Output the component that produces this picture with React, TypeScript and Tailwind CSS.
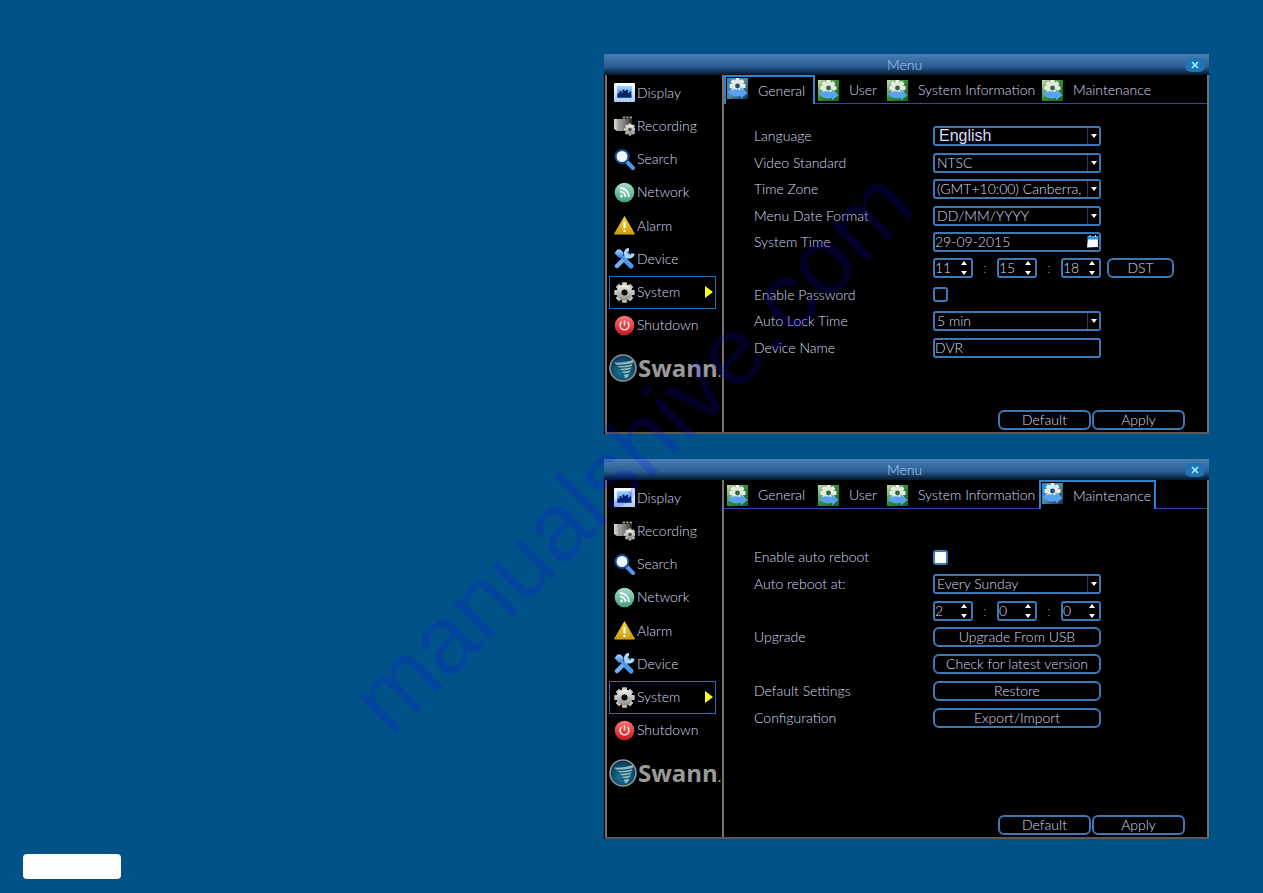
import { useId, type ReactNode } from "react";
import clsx from "clsx";

type TabName = "General" | "User" | "System Information" | "Maintenance";

const tabs: { name: TabName; width: string }[] = [
  { name: "General", width: "w-[91px]" },
  { name: "User", width: "w-[69px]" },
  { name: "System Information", width: "w-[155px]" },
  { name: "Maintenance", width: "w-[117px]" },
];

// shared gradients, referenced by id from every icon
function Gradients() {
  return (
    <svg width="0" height="0" className="absolute" aria-hidden="true">
      <defs>
        <linearGradient id="silver" x1="0" y1="0" x2="0" y2="1">
          <stop offset="0" stopColor="#f2f2ee" />
          <stop offset="1" stopColor="#8b8b88" />
        </linearGradient>
        <linearGradient id="film" x1="0" y1="0" x2="1" y2="0">
          <stop offset="0" stopColor="#d8d6d2" />
          <stop offset="1" stopColor="#4a4845" />
        </linearGradient>
        <linearGradient id="sky" x1="0" y1="0" x2="0" y2="1">
          <stop offset="0" stopColor="#a9d6fb" />
          <stop offset="1" stopColor="#2f7de0" />
        </linearGradient>
        <linearGradient id="frame" x1="0" y1="0" x2="0" y2="1">
          <stop offset="0" stopColor="#ffffff" />
          <stop offset="1" stopColor="#a9cdf0" />
        </linearGradient>
        <linearGradient id="gold" x1="0" y1="0" x2="0" y2="1">
          <stop offset="0" stopColor="#f8dc5a" />
          <stop offset="1" stopColor="#c99a08" />
        </linearGradient>
        <linearGradient id="mint" x1="0" y1="0" x2="0" y2="1">
          <stop offset="0" stopColor="#a5e0c6" />
          <stop offset="1" stopColor="#3f9f82" />
        </linearGradient>
        <linearGradient id="ruby" x1="0" y1="0" x2="0" y2="1">
          <stop offset="0" stopColor="#f77a78" />
          <stop offset="1" stopColor="#c8141e" />
        </linearGradient>
        <linearGradient id="tabGreen" x1="0" y1="0" x2="1" y2="1">
          <stop offset="0" stopColor="#c4dfae" />
          <stop offset="0.5" stopColor="#2f8a34" />
          <stop offset="1" stopColor="#0b6a12" />
        </linearGradient>
        <linearGradient id="tabBlue" x1="0" y1="0" x2="1" y2="1">
          <stop offset="0" stopColor="#2f86d8" />
          <stop offset="0.5" stopColor="#4d8a9c" />
          <stop offset="1" stopColor="#06335c" />
        </linearGradient>
        <radialGradient id="globe" cx="0.5" cy="0.6" r="0.6">
          <stop offset="0" stopColor="#1f86a8" />
          <stop offset="1" stopColor="#062f4c" />
        </radialGradient>
      </defs>
    </svg>
  );
}

function Gear({
  cx,
  cy,
  r,
  hole,
  fill = "url(#silver)",
  teeth = "#c9c9c4",
}: {
  cx: number;
  cy: number;
  r: number;
  hole: string;
  fill?: string;
  teeth?: string;
}) {
  return (
    <g transform={`translate(${cx} ${cy})`}>
      {[0, 45, 90, 135].map((angle) => (
        <rect
          key={angle}
          x={-r * 0.24}
          y={-r}
          width={r * 0.48}
          height={r * 2}
          rx={r * 0.08}
          fill={teeth}
          transform={`rotate(${angle})`}
        />
      ))}
      <circle r={r * 0.78} fill={fill} />
      <circle r={r * 0.3} fill={hole} />
    </g>
  );
}

function Icon({ className, children }: { className?: string; children: ReactNode }) {
  return (
    <svg
      viewBox="0 0 21 21"
      className={clsx("size-[21px] shrink-0", className)}
      aria-hidden="true"
    >
      {children}
    </svg>
  );
}

const menuItems: { name: string; icon: ReactNode }[] = [
  {
    name: "Display",
    icon: (
      <>
        <rect y="1" width="21" height="19" rx="1" fill="url(#frame)" />
        <rect x="3" y="4" width="15" height="12" fill="url(#sky)" />
        <path
          d="M3.500 15.500v-4h2V9h2v2h1V7.500h2V9h1.500V8h2v3h1.500V9.500h1.500v6z"
          fill="#08265e"
        />
      </>
    ),
  },
  {
    name: "Recording",
    icon: (
      <>
        <path d="M8 1h10v12H8z" fill="#2c2a28" />
        <path
          d="M9 2.500h2m1.500 0h2m1.500 0h2"
          stroke="#a09c98"
          strokeWidth="1.500"
        />
        <path d="M0 4h16v12H3l-3-2z" fill="url(#film)" />
        <path d="M5 4v12M10 4v12" stroke="#8a8784" />
        <Gear cx={16} cy={14.5} r={6} hole="#4a4845" />
      </>
    ),
  },
  {
    name: "Search",
    icon: (
      <>
        <path
          d="M13 13l6 6"
          stroke="#4c97ec"
          strokeWidth="4"
          strokeLinecap="round"
        />
        <circle cx="8" cy="7.500" r="6" fill="#eef6ff" />
        <circle
          cx="8"
          cy="7.500"
          r="6.500"
          fill="none"
          stroke="#124a94"
          strokeWidth="2"
        />
      </>
    ),
  },
  {
    name: "Network",
    icon: (
      <>
        <circle cx="10.500" cy="10.500" r="9.800" fill="url(#mint)" />
        <circle cx="7.500" cy="14" r="1.500" fill="#fff" />
        <path
          d="M6 9.500a5.500 5.500 0 0 1 5.500 5.500M6 6a9 9 0 0 1 9 9"
          fill="none"
          stroke="#fff"
          strokeWidth="1.800"
        />
      </>
    ),
  },
  {
    name: "Alarm",
    icon: (
      <>
        <path
          d="M10.500 1.500L20.500 19H0.500z"
          fill="url(#gold)"
          stroke="#d8a810"
          strokeLinejoin="round"
        />
        <path d="M10.500 7v6.500M10.500 15v2" stroke="#fff" strokeWidth="2" />
      </>
    ),
  },
  {
    name: "Device",
    icon: (
      <>
        <path
          d="M3 18L14 7"
          stroke="#6fb0f4"
          strokeWidth="4.500"
          strokeLinecap="round"
        />
        <path
          d="M19 5.500a3.700 3.700 0 1 1-4-4"
          fill="none"
          stroke="#a9d6fb"
          strokeWidth="3.400"
        />
        <path d="M6 7l10 10" stroke="#4c97ec" strokeWidth="3" />
        <path
          d="M12.500 13.500l4.500 4.500"
          stroke="#4c97ec"
          strokeWidth="5"
          strokeLinecap="round"
        />
        <path d="M0.500 5l3-3.500h3l3 3v4l-4.500 1.500z" fill="url(#sky)" />
      </>
    ),
  },
  {
    name: "System",
    icon: <Gear cx={10.5} cy={10.5} r={10.2} hole="#0a0a0a" />,
  },
  {
    name: "Shutdown",
    icon: (
      <>
        <circle cx="10.500" cy="10.500" r="9.800" fill="url(#ruby)" />
        <path
          d="M7.500 7a4.500 4.500 0 1 0 6 0M10.500 5.500v5"
          fill="none"
          stroke="#ffe4e0"
          strokeWidth="1.400"
        />
      </>
    ),
  },
];

function TabIcon({ active }: { active: boolean }) {
  return (
    <Icon className={active ? "mt-px self-start" : undefined}>
      <rect width="21" height="21" fill={active ? "url(#tabBlue)" : "url(#tabGreen)"} />
      <Gear
        cx={10.5}
        cy={8}
        r={8}
        hole={active ? "#1c4f7c" : "#2a6a38"}
        fill="#e4e8e0"
        teeth="#f2f4ee"
      />
      <path
        d="M1 14c2.500-3 7-3.500 12.500-2V9l7 6-6.500 5.500V18c-5 1.200-10 .2-13-4z"
        fill="#5aa2ee"
      />
    </Icon>
  );
}

function SwannLogo() {
  return (
    <div className="mt-3 flex items-center gap-px pl-0.5">
      <svg viewBox="0 0 28 28" className="size-7 shrink-0" aria-hidden="true">
        <circle cx="14" cy="14" r="13" fill="url(#globe)" stroke="#8e9494" strokeWidth="1.600" />
        <path
          d="M5 8.500c6 .5 13-.5 19.500-2.500l-1 4L19 23l-3 1.500c-1-5-4-10-11-16z"
          fill="#8fb8c0"
        />
        <path
          d="M5 11c7 .8 13 .2 19-1.500M8 14c6 .5 10 0 15-1.500M10 17c4 .3 8-.2 12-1.500M12 20c3 .2 6-.2 9-1.200"
          fill="none"
          stroke="#0d4a66"
          strokeWidth="1.200"
        />
      </svg>
      <span className="font-['Open_Sans',sans-serif] text-2xl leading-7 font-bold text-[#9a9a98]">
        Swann<span className="text-xs">.</span>
      </span>
    </div>
  );
}

function Sidebar() {
  return (
    <nav className="w-[119px] shrink-0 border-x-2 border-[#77726c] pt-px">
      <ul className="grid h-[266px] auto-rows-fr">
        {menuItems.map(({ name, icon }) => (
          <li key={name} className="pr-1.5 pl-0.5">
            <a
              href={`#${name.toLowerCase()}`}
              className={clsx(
                "flex h-full items-center gap-0.5 border pr-0.5 pl-1",
                name === "System" ? "border-[#1c72b4]" : "border-transparent",
              )}
            >
              <Icon>{icon}</Icon>
              {name}
              {name === "System" && (
                <svg viewBox="0 0 8 12" className="ml-auto h-3 w-2" aria-hidden="true">
                  <path d="M0 0l8 6-8 6z" fill="#ffff1e" />
                </svg>
              )}
            </a>
          </li>
        ))}
      </ul>
      <SwannLogo />
    </nav>
  );
}

function TabBar({ active }: { active: TabName }) {
  return (
    <div role="tablist" className="flex h-[29px]">
      {tabs.map(({ name, width }) => {
        const selected = name === active;
        return (
          <button
            key={name}
            type="button"
            role="tab"
            aria-selected={selected}
            className={clsx(
              "flex items-center gap-2.5 whitespace-nowrap",
              width,
              selected
                ? "border-x-2 border-t-2 border-[#2f82cc] pl-px"
                : "border-b border-[#2450a0] pt-0.5 pl-[3px]",
            )}
          >
            <TabIcon active={selected} />
            {name}
          </button>
        );
      })}
      <div className="flex-1 border-b border-[#2450a0]" />
    </div>
  );
}

function Row({
  label,
  htmlFor,
  children,
}: {
  label?: string;
  htmlFor?: string;
  children: ReactNode;
}) {
  return (
    <div className="flex items-center">
      <div className="w-[179px] shrink-0">
        {label && <label htmlFor={htmlFor}>{label}</label>}
      </div>
      {children}
    </div>
  );
}

function SelectRow({
  label,
  value,
  large,
}: {
  label: string;
  value: string;
  large?: boolean;
}) {
  const id = useId();
  return (
    <Row label={label} htmlFor={id}>
      <div className="relative">
        <select
          id={id}
          className={clsx(
            "block h-5 w-[168px] appearance-none rounded-[3px] border-2 border-[#3a78b8] bg-black pr-4",
            large
              ? "pl-1 font-['Liberation_Sans',sans-serif] text-base leading-4 text-[#dcdcff]"
              : "pl-0.5 leading-4",
          )}
        >
          <option>{value}</option>
        </select>
        <span className="pointer-events-none absolute inset-y-0.5 right-0.5 flex w-3 items-center justify-center border-l border-[#34346c] bg-black">
          <svg viewBox="0 0 6 4" className="h-1 w-1.5" aria-hidden="true">
            <path d="M0 0h6L3 4z" fill="#fff" />
          </svg>
        </span>
      </div>
    </Row>
  );
}

function Spinner({ label, value }: { label: string; value: string }) {
  return (
    <div className="flex h-5 w-10 items-center rounded-[3px] border-2 border-[#3a78b8] pr-1">
      <input
        aria-label={label}
        inputMode="numeric"
        defaultValue={value}
        className="w-0 flex-1 bg-transparent leading-4 outline-none"
      />
      <div className="flex flex-col gap-1.5">
        <button type="button" aria-label={`${label} up`}>
          <svg viewBox="0 0 6 4" className="block h-1 w-1.5">
            <path d="M0 4h6L3 0z" fill="#fff" />
          </svg>
        </button>
        <button type="button" aria-label={`${label} down`}>
          <svg viewBox="0 0 6 4" className="block h-1 w-1.5">
            <path d="M0 0h6L3 4z" fill="#fff" />
          </svg>
        </button>
      </div>
    </div>
  );
}

function TimeFields({ values }: { values: [string, string, string] }) {
  return (
    <div className="flex items-center">
      <Spinner label="Hours" value={values[0]} />
      <span className="w-6 text-center text-[#8a8ca8]">:</span>
      <Spinner label="Minutes" value={values[1]} />
      <span className="w-6 text-center text-[#8a8ca8]">:</span>
      <Spinner label="Seconds" value={values[2]} />
    </div>
  );
}

function PillButton({ width, children }: { width: string; children: ReactNode }) {
  return (
    <button
      type="button"
      className={clsx(
        "h-5 rounded-[6px] border-2 border-[#3a78b8] text-center leading-4 whitespace-nowrap",
        width,
      )}
    >
      {children}
    </button>
  );
}

const checkboxStyle =
  "size-[15px] appearance-none rounded-[3px] border-2 border-[#3a78b8] checked:bg-white";

function GeneralForm() {
  return (
    <div className="mt-[19px] grid h-[238px] auto-rows-fr pl-[30px]">
      <SelectRow label="Language" value="English" large />
      <SelectRow label="Video Standard" value="NTSC" />
      <SelectRow label="Time Zone" value="(GMT+10:00) Canberra," />
      <SelectRow label="Menu Date Format" value="DD/MM/YYYY" />
      <Row label="System Time" htmlFor="system-time">
        <div className="flex h-5 w-[168px] items-center rounded-[3px] border-2 border-[#3a78b8]">
          <input
            id="system-time"
            defaultValue="29-09-2015"
            className="w-0 flex-1 bg-transparent leading-4 outline-none"
          />
          <svg viewBox="0 0 13 13" className="size-[13px]" aria-hidden="true">
            <path d="M2 2h10v10l-11 .5z" fill="#f4f8ff" />
            <path d="M1.500 1h11v3.500h-11z" fill="#2f8fe0" />
            <path d="M4 0v2M9.500 0v2" stroke="#fff" />
          </svg>
        </div>
      </Row>
      <Row>
        <div className="flex gap-1.5">
          <TimeFields values={["11", "15", "18"]} />
          <PillButton width="w-[67px]">DST</PillButton>
        </div>
      </Row>
      <Row label="Enable Password" htmlFor="enable-password">
        <input id="enable-password" type="checkbox" className={checkboxStyle} />
      </Row>
      <SelectRow label="Auto Lock Time" value="5 min" />
      <Row label="Device Name" htmlFor="device-name">
        <input
          id="device-name"
          defaultValue="DVR"
          className="h-5 w-[168px] rounded-[3px] border-2 border-[#3a78b8] bg-black leading-4 outline-none"
        />
      </Row>
    </div>
  );
}

function MaintenanceForm() {
  return (
    <div className="mt-[35px] grid h-[187px] auto-rows-fr pl-[30px]">
      <Row label="Enable auto reboot" htmlFor="auto-reboot">
        <input
          id="auto-reboot"
          type="checkbox"
          defaultChecked
          className={checkboxStyle}
        />
      </Row>
      <SelectRow label="Auto reboot at:" value="Every Sunday" />
      <Row>
        <TimeFields values={["2", "0", "0"]} />
      </Row>
      <Row label="Upgrade">
        <PillButton width="w-[168px]">Upgrade From USB</PillButton>
      </Row>
      <Row>
        <PillButton width="w-[168px]">Check for latest version</PillButton>
      </Row>
      <Row label="Default Settings">
        <PillButton width="w-[168px]">Restore</PillButton>
      </Row>
      <Row label="Configuration">
        <PillButton width="w-[168px]">Export/Import</PillButton>
      </Row>
    </div>
  );
}

function MenuWindow({ tab, children }: { tab: TabName; children: ReactNode }) {
  return (
    <section className="flex min-h-[380px] flex-col bg-black">
      <header className="grid h-[21px] grid-cols-[1fr_auto_1fr] items-center bg-linear-to-b from-[#4a7fb4] via-[#2a5d94] via-60% to-[#04182c] pr-1">
        <h2 className="col-start-2 text-[#b4cdea]">Menu</h2>
        <button
          type="button"
          aria-label="Close"
          className="flex h-3.5 w-5 items-center justify-center justify-self-end rounded-[6px] bg-[#2273b4]"
        >
          <svg viewBox="0 0 8 8" className="size-2">
            <path d="M1 1l6 6M7 1L1 7" stroke="#9ff4ff" strokeWidth="1.600" />
          </svg>
        </button>
      </header>
      <div className="ml-px flex flex-1 border-b-2 border-[#5c5a56]">
        <Sidebar />
        <div className="flex min-w-0 flex-1 flex-col border-r-2 border-[#77726c]">
          <TabBar active={tab} />
          {children}
          <footer className="mt-auto flex justify-end gap-px pr-[22px] pb-0.5">
            <PillButton width="w-[93px]">Default</PillButton>
            <PillButton width="w-[93px]">Apply</PillButton>
          </footer>
        </div>
      </div>
    </section>
  );
}

export default function App() {
  return (
    <main className="relative grid min-h-screen grid-cols-[604fr_605fr_54fr] bg-[#005289] font-['Lato',sans-serif] text-sm font-light text-[#d6d8f2]">
      <Gradients />
      <div className="mb-3.5 ml-[23px] h-[25px] w-[98px] self-end rounded-[4px] bg-white" />
      <div className="flex flex-col gap-[25px] py-[54px]">
        <MenuWindow tab="General">
          <GeneralForm />
        </MenuWindow>
        <MenuWindow tab="Maintenance">
          <MaintenanceForm />
        </MenuWindow>
      </div>
      <div className="pointer-events-none absolute inset-0 flex items-center justify-center overflow-hidden pt-2">
        <span className="-rotate-45 font-['Liberation_Sans',sans-serif] text-8xl leading-none font-normal text-[#0000ff]/16">
          manualshive.com
        </span>
      </div>
    </main>
  );
}
